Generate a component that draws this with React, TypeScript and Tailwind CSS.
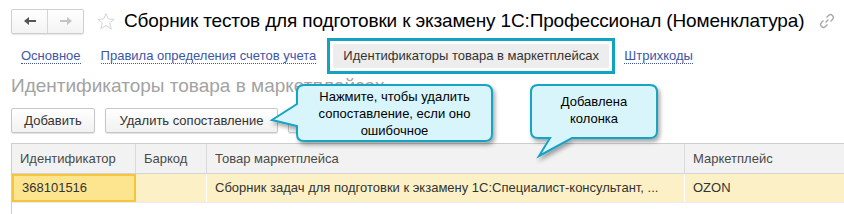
import React from "react";

const F = { fontFamily: '"Liberation Sans", Arial, sans-serif' };

function Callout1() {
  return (
    <div className="absolute left-[262px] top-[80px] w-[240px] h-[72px]">
      <svg width="240" height="72" className="absolute left-0 top-0" style={{ overflow: "visible" }}>
        <defs>
          <filter id="sh1" x="-20%" y="-20%" width="140%" height="150%">
            <feDropShadow dx="2" dy="3" stdDeviation="2" floodColor="#000" floodOpacity="0.35" />
          </filter>
        </defs>
        <path
          d="M42 5 H223 Q230 5 230 12 V54 Q230 61 223 61 H42 Q35 61 35 54 V46 L10 40 L35 24 V12 Q35 5 42 5 Z"
          fill="#d8f5fc"
          stroke="#17a3c4"
          strokeWidth="2"
          filter="url(#sh1)"
        />
      </svg>
      <div
        className="absolute left-[35px] top-[8px] w-[195px] text-center text-[13px] leading-[17px] text-black"
        style={F}
      >
        Нажмите, чтобы удалить<br />сопоставление, если оно<br />ошибочное
      </div>
    </div>
  );
}

function Callout2() {
  return (
    <div className="absolute left-[520px] top-[80px] w-[150px] h-[82px]">
      <svg width="150" height="82" className="absolute left-0 top-0" style={{ overflow: "visible" }}>
        <defs>
          <filter id="sh2" x="-20%" y="-20%" width="150%" height="150%">
            <feDropShadow dx="2" dy="3" stdDeviation="2" floodColor="#000" floodOpacity="0.35" />
          </filter>
        </defs>
        <path
          d="M18 5 H130 Q137 5 137 12 V51 Q137 58 130 58 H52 L19 76 L30 58 H18 Q11 58 11 51 V12 Q11 5 18 5 Z"
          fill="#d8f5fc"
          stroke="#17a3c4"
          strokeWidth="2"
          filter="url(#sh2)"
        />
      </svg>
      <div
        className="absolute left-[11px] top-[13px] w-[126px] text-center text-[13px] leading-[17px] text-black"
        style={F}
      >
        Добавлена<br />колонка
      </div>
    </div>
  );
}

function Btn({ children, w }: { children?: React.ReactNode; w: string }) {
  return (
    <div
      className={`${w} shrink-0 h-[25px] flex items-center justify-center rounded-[2px] border border-[#c6c6c6] bg-gradient-to-b from-white to-[#f1f1f1] shadow-[0_1px_1px_rgba(0,0,0,0.12)] text-[13px] text-[#333]`}
    >
      {children}
    </div>
  );
}

export default function App() {
  return (
    <div className="relative w-[844px] h-[214px] overflow-hidden bg-white" style={F}>
      <div className="flex flex-col">
        {/* Title row */}
        <div className="flex items-center h-[30px] mt-[6px] pl-[11px]">
          <div className="shrink-0 flex h-[25px] w-[73px] rounded-[2px] border border-[#cfcfcf] bg-gradient-to-b from-white to-[#f3f3f3] shadow-[0_1px_1px_rgba(0,0,0,0.1)]">
            <div className="flex-1 flex items-center justify-center border-r border-[#d6d6d6]">
              <svg width="14" height="10" viewBox="0 0 14 10">
                <path d="M1 5 L6 1 V4 H13 V6 H6 V9 Z" fill="#555" />
              </svg>
            </div>
            <div className="flex-1 flex items-center justify-center">
              <svg width="14" height="10" viewBox="0 0 14 10">
                <path d="M13 5 L8 1 V4 H1 V6 H8 V9 Z" fill="#c4c4c4" />
              </svg>
            </div>
          </div>
          <div className="shrink-0 ml-[12px] w-[20px] flex items-center justify-center">
            <svg width="20" height="19" viewBox="0 0 20 19">
              <path
                d="M10 1.5 L12.3 7 L18.2 7.3 L13.6 11 L15.2 16.8 L10 13.5 L4.8 16.8 L6.4 11 L1.8 7.3 L7.7 7 Z"
                fill="none"
                stroke="#d4d4d4"
                strokeWidth="1"
                strokeLinejoin="round"
              />
            </svg>
          </div>
          <div className="ml-[8px] text-[19px] tracking-[-0.15px] leading-[24px] text-black whitespace-nowrap">
            Сборник тестов для подготовки к экзамену 1С:Профессионал (Номенклатура)
          </div>
          <div className="shrink-0 ml-auto mr-[8px] flex items-center">
            <svg width="18" height="18" viewBox="0 0 18 18" fill="none" stroke="#a8a8a8" strokeWidth="1.3">
              <path d="M7.5 10.5 L10.5 7.5" />
              <path d="M8.5 5.5 L10.5 3.5 Q12.5 1.5 14.5 3.5 Q16.5 5.5 14.5 7.5 L12.5 9.5" />
              <path d="M9.5 12.5 L7.5 14.5 Q5.5 16.5 3.5 14.5 Q1.5 12.5 3.5 10.5 L5.5 8.5" />
            </svg>
          </div>
        </div>

        {/* Tabs row */}
        <div className="flex items-center h-[36px] mt-[2px] pl-[21px] text-[13px]">
          <span className="text-[#3e55a8] border-b border-dotted border-[#3e55a8] leading-[15px]">Основное</span>
          <span className="ml-[20px] text-[#3e55a8] border-b border-dotted border-[#3e55a8] leading-[15px]">
            Правила определения счетов учета
          </span>
          <div className="ml-[11px] w-[288px] h-[36px] border-[3px] border-[#12a2c2] flex items-center px-[3px]">
            <div className="flex-1 h-[24px] px-[10px] flex items-center bg-[#ededed] rounded-[2px] text-[#333]">
              Идентификаторы товара в маркетплейсах
            </div>
          </div>
          <span className="ml-[9px] text-[#3e55a8] border-b border-dotted border-[#3e55a8] leading-[15px]">Штрихкоды</span>
        </div>

        {/* Section title */}
        <div className="pl-[11px] mt-[1px] h-[24px] text-[19px] leading-[22px] text-[#a3a3a3] whitespace-nowrap">
          Идентификаторы товара в маркетплейсах
        </div>

        {/* Buttons */}
        <div className="flex gap-[10px] pl-[11px] mt-[9px]">
          <Btn w="w-[84px]">Добавить</Btn>
          <Btn w="w-[173px]">Удалить сопоставление</Btn>
          <Btn w="w-[60px]"></Btn>
        </div>

        {/* Table */}
        <div className="ml-[11px] mt-[10px] border-l border-t border-[#cdcdcd] h-[80px] text-[13px]">
          <div className="flex h-[30px] bg-[#f2f2f2] border-b border-[#d4d4d4] text-[#4a4a4a]">
            <div className="w-[124px] flex items-center pl-[8px] border-r border-[#dadada]">Идентификатор</div>
            <div className="w-[71px] flex items-center pl-[8px] border-r border-[#dadada]">Баркод</div>
            <div className="w-[478px] flex items-center pl-[8px] border-r border-[#dadada]">Товар маркетплейса</div>
            <div className="flex-1 flex items-center pl-[8px]">Маркетплейс</div>
          </div>
          <div className="flex h-[29px] bg-[#fcf1c6] border-b border-[#ececec] text-[#333]">
            <div className="w-[124px] flex items-center pl-[8px] bg-[#fde48e] border-2 border-[#f5c63c]">
              368101516
            </div>
            <div className="w-[71px] border-r border-[#ffffff]"></div>
            <div className="w-[478px] flex items-center pl-[8px] border-r border-[#ffffff] whitespace-nowrap overflow-hidden">
              Сборник задач для подготовки к экзамену 1С:Специалист-консультант, ...
            </div>
            <div className="flex-1 flex items-center pl-[8px]">OZON</div>
          </div>
        </div>
      </div>

      <Callout1 />
      <Callout2 />
    </div>
  );
}
